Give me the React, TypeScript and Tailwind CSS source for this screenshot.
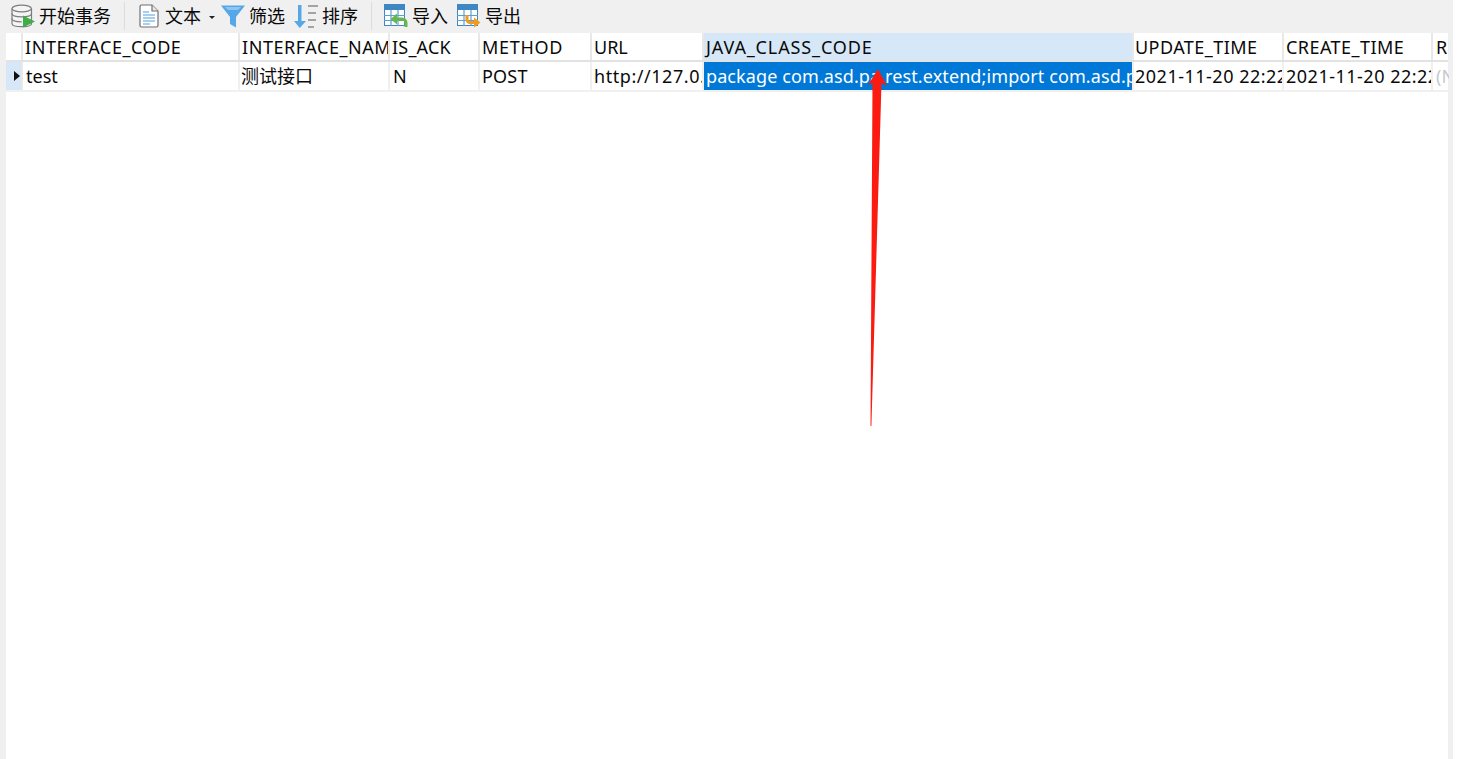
const font = "[font-family:'Noto_Sans','Noto_Sans_CJK_SC',sans-serif]";

function DbIcon() {
  return (
    <svg width="24" height="24" viewBox="0 0 24 24" className="shrink-0">
      <g fill="#f4f4f4" stroke="#7d7d7d" strokeWidth="1.2">
        <path d="M1 4.500v15c0 2 4 3.200 9.500 3.200s10-1.200 10-3.200v-15" />
        <ellipse cx="10.700" cy="4.500" rx="9.700" ry="3.400" />
        <path d="M1 9.500c0 2 4 3.300 9.700 3.300s9.800-1.300 9.800-3.300" fill="none" />
        <path d="M1 14.500c0 2 4 3.300 9.700 3.300" fill="none" />
      </g>
      <path d="M12 11.500v12l12-6z" fill="#3fae49" />
    </svg>
  );
}

function DocIcon() {
  return (
    <svg width="20" height="24" viewBox="0 0 20 24" className="shrink-0">
      <path d="M1 2.500a1.500 1.500 0 0 1 1.500-1.500H13l6 6v14.500a1.500 1.500 0 0 1-1.500 1.500h-15A1.500 1.500 0 0 1 1 21.500z" fill="#fff" stroke="#6f6f6f" strokeWidth="1.200" />
      <path d="M13 1v6h6" fill="#e8e8e8" stroke="#6f6f6f" strokeWidth="1.200" />
      <path d="M4 8h6M4 11h12M4 14h12M4 17h12M4 20h7" stroke="#4d9fe0" strokeWidth="1.200" />
    </svg>
  );
}

function FilterIcon() {
  return (
    <svg width="24" height="24" viewBox="0 0 24 24" className="shrink-0">
      <path d="M0 1.500h24L15 13v10.500l-6-3.500v-7z" fill="#56a7e8" />
      <path d="M4 3h16l-3 3h-10z" fill="#8cc6f2" />
    </svg>
  );
}

function SortIcon() {
  return (
    <svg width="24" height="25" viewBox="0 0 24 25" className="shrink-0">
      <path d="M4 1h3.500v16h4.500l-6.250 7-5.750-7h4z" fill="#56a7e8" />
      <path d="M14 2h10M14 9h8M14 16h8M14 23h6" stroke="#8a8a8a" strokeWidth="1.500" />
    </svg>
  );
}

function TableIcon({ out }: { out?: boolean }) {
  return (
    <svg width="24" height="24" viewBox="0 0 24 24" className="shrink-0">
      <rect x="0.500" y="0.500" width="20" height="21" fill="#fff" stroke="#3f87c4" />
      <rect x="0" y="0" width="21" height="6" fill="#3f87c4" />
      <path d="M7 6v16M14 6v16M0 11.500h21M0 16.500h21" stroke="#5a9fd6" strokeWidth="1.200" />
      {out ? (
        <>
          <path d="M10 11v4.500a3 3 0 0 0 3 3h5" fill="none" stroke="#f39a1f" strokeWidth="3" />
          <path d="M17 13.500l6.500 5-6.500 5z" fill="#f39a1f" />
        </>
      ) : (
        <>
          <path d="M22 23v-4a4 4 0 0 0-4-4h-6" fill="none" stroke="#66b84a" strokeWidth="3" />
          <path d="M13 9.500l-6.500 5.500 6.500 5.500z" fill="#66b84a" />
        </>
      )}
    </svg>
  );
}

const cols = [
  { name: "INTERFACE_CODE", w: "w-[217px]", val: "test", head: "pl-[2px] tracking-[0.55px]", cell: "pl-[3px]" },
  { name: "INTERFACE_NAME", w: "w-[150px]", val: "测试接口", head: "pl-[2px] tracking-[0.55px]", cell: "pl-[1px]" },
  { name: "IS_ACK", w: "w-[90px]", val: "N", head: "pl-[2px] tracking-[0.2px]", cell: "pl-[3px]" },
  { name: "METHOD", w: "w-[112px]", val: "POST", head: "pl-[2px] tracking-[0.7px]", cell: "pl-[2px] tracking-[0.2px]" },
  { name: "URL", w: "w-[112px]", val: "http://127.0.0.1:8080/rest", head: "pl-[2px]", cell: "pl-[2px] tracking-[0.55px]" },
  { name: "JAVA_CLASS_CODE", w: "w-[430px]", val: "package com.asd.pa.rest.extend;import com.asd.pa.rest.extend.Test", kind: "sel", head: "pl-[2px] tracking-[0.87px]", cell: "pl-[2px] tracking-[0.1px]" },
  { name: "UPDATE_TIME", w: "w-[150px]", val: "2021-11-20 22:22:10", head: "pl-[1px] tracking-[0.45px]", cell: "pl-[1px] tracking-[0.5px]" },
  { name: "CREATE_TIME", w: "w-[149px]", val: "2021-11-20 22:22:10", head: "pl-[2px] tracking-[0.45px]", cell: "pl-[2px] tracking-[0.5px]" },
  { name: "REMARK", w: "w-[16px]", val: "(Null)", kind: "null", head: "pl-[3px] tracking-[0.5px]", cell: "pl-[3px]" },
];

export default function App() {
  return (
    <div className={`h-screen w-full overflow-hidden bg-white text-[18px] leading-[24px] text-[#0a0a0a] ${font}`}>
      <div className="flex h-full w-[1453px] flex-col bg-[#f0f0f0]">
        <div className="flex h-[33px] shrink-0 items-center pl-[11px] pb-[1px]">
          <DbIcon />
          <span className="ml-[4px]">开始事务</span>
          <div className="ml-[13px] h-[28px] w-px bg-[#dcdcdc]" />
          <div className="ml-[14px]"><DocIcon /></div>
          <span className="ml-[6px]">文本</span>
          <div className="ml-[8px] mt-[2px] h-0 w-0 border-x-[3px] border-t-[3px] border-x-transparent border-t-[#222]" />
          <div className="ml-[6px]"><FilterIcon /></div>
          <span className="ml-[4px]">筛选</span>
          <div className="ml-[9px]"><SortIcon /></div>
          <span className="ml-[4px]">排序</span>
          <div className="ml-[13px] h-[28px] w-px bg-[#dcdcdc]" />
          <div className="ml-[12px]"><TableIcon /></div>
          <span className="ml-[4px]">导入</span>
          <div className="ml-[9px]"><TableIcon out /></div>
          <span className="ml-[4px]">导出</span>
        </div>
        <div className="ml-[6px] mr-[5px] flex-1 bg-white">
          <div className="flex h-[29px] border-b-2 border-[#e2e2e2]">
            <div className="h-full w-[17px] shrink-0 border-r-2 border-[#e8e8e8]" />
            {cols.map((c) => (
              <div
                key={c.name}
                className={`${c.w} ${c.head} shrink-0 overflow-hidden whitespace-nowrap pt-[2px] ${c.kind === "null" ? "" : "border-r-2 border-[#e8e8e8]"} ${c.kind === "sel" ? "bg-[#d6e8f7]" : ""}`}
              >
                {c.name}
              </div>
            ))}
          </div>
          <div className="flex h-[30px] border-b-2 border-[#f0f0f0]">
            <div className="flex h-full w-[17px] shrink-0 items-center justify-end border-r-2 border-[#e8e8e8] bg-[#d6e8f7] pr-[1px]">
              <div className="h-0 w-0 border-y-[5px] border-l-[6px] border-y-transparent border-l-[#111]" />
            </div>
            {cols.map((c) => (
              <div
                key={c.name}
                className={`${c.w} ${c.cell} shrink-0 overflow-hidden whitespace-nowrap pt-[2px] ${c.kind === "null" ? "text-[#c4c8d0]" : "border-r-2 border-[#f0f0f0]"} ${c.kind === "sel" ? "bg-[#0078d7] text-white" : ""}`}
              >
                {c.val}
              </div>
            ))}
          </div>
        </div>
      </div>
      <svg width="40" height="370" viewBox="0 0 40 370" className="absolute left-[855px] top-[62px]">
        <path d="M23 7L32 24L26.500 21L16.400 364L15.500 364L17.500 21L13 23z" fill="#fb1b10" />
      </svg>
    </div>
  );
}
